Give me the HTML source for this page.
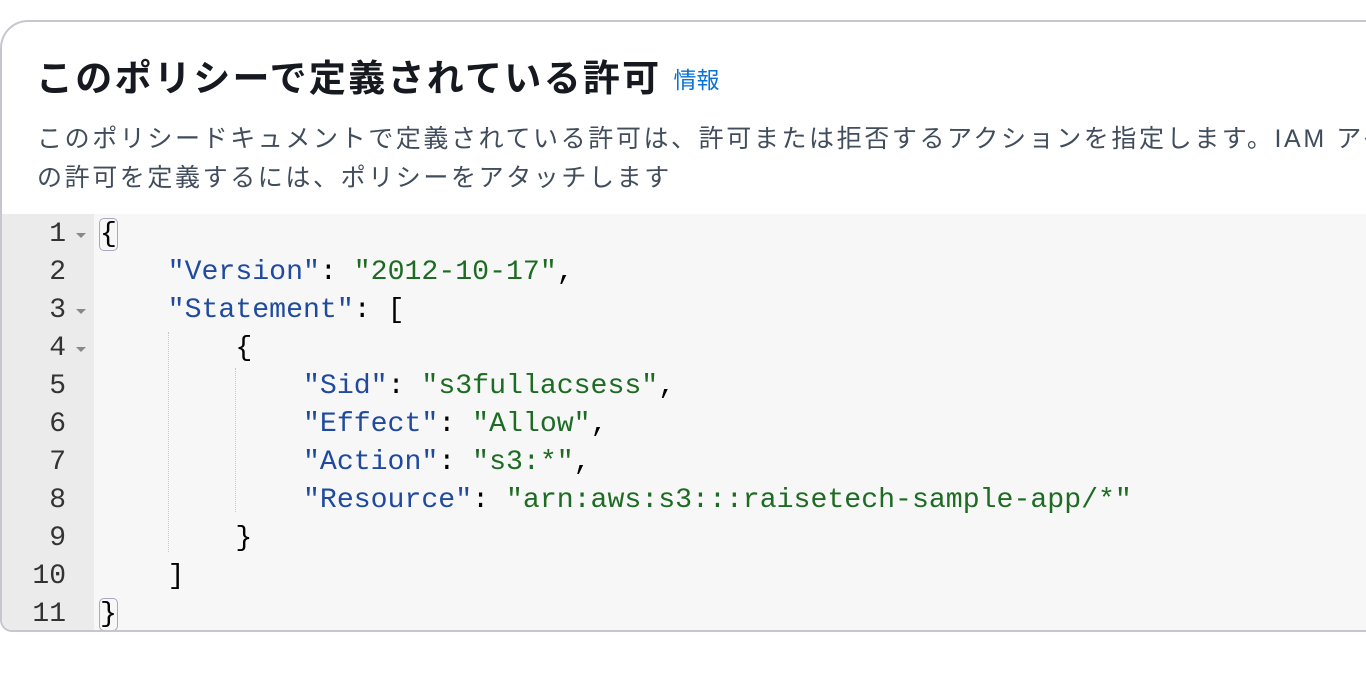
<!DOCTYPE html>
<html><head><meta charset="utf-8"><style>
body{margin:0;width:1366px;height:680px;background:#fff;overflow:hidden;position:relative;font-family:"Liberation Sans","Noto Sans CJK JP",sans-serif}
.card{position:absolute;left:0;top:20px;width:1420px;height:612px;border:2px solid #c6c6cd;border-radius:28px 0 0 12px;border-right:none;overflow:hidden;box-sizing:border-box;background:#fff}
h1{position:absolute;left:34px;top:35px;margin:0;font-size:37px;letter-spacing:2.3px;font-weight:bold;color:#16191f;white-space:nowrap;line-height:44px}
h1 span{font-size:23px;letter-spacing:0;color:#0972d3;font-weight:normal;margin-left:12px;vertical-align:3px}
.desc{position:absolute;left:35px;top:98px;font-size:25px;letter-spacing:2.6px;color:#414d5c;line-height:39px;white-space:nowrap}
.ed{position:absolute;left:0;top:192px;width:1420px;height:420px;background:#f7f7f7}
.gut{position:absolute;left:-2px;top:0;width:94px;height:420px;background:#ebebeb}
.ln{position:absolute;right:28px;width:60px;text-align:right;font:28px "Liberation Mono","DejaVu Sans Mono",monospace;color:#333;line-height:38px}
.fold{position:absolute;left:76px;width:0;height:0;border-left:5px solid transparent;border-right:5px solid transparent;border-top:5px solid #888}
.code{position:absolute;left:98px;top:0;font:28.2px "Liberation Mono","DejaVu Sans Mono",monospace;line-height:38px;white-space:pre;color:#000}
.k{color:#1f4a9e}.s{color:#1e6b23}
.br{outline:1.5px solid #a8a8c0;border-radius:4px}
.guide{position:absolute;border-left:1px dotted #c9c9b8;width:0}
</style></head><body>
<div class="card">
<h1>このポリシーで定義されている許可<span>情報</span></h1>
<div class="desc">このポリシードキュメントで定義されている許可は、許可または拒否するアクションを指定します。IAM アイデンティティ<br>の許可を定義するには、ポリシーをアタッチします</div>
<div class="ed">
<div class="gut">
<div class="ln" style="top:2px">1</div><div class="fold" style="top:19px"></div>
<div class="ln" style="top:40px">2</div>
<div class="ln" style="top:78px">3</div><div class="fold" style="top:95px"></div>
<div class="ln" style="top:116px">4</div><div class="fold" style="top:133px"></div>
<div class="ln" style="top:154px">5</div>
<div class="ln" style="top:192px">6</div>
<div class="ln" style="top:230px">7</div>
<div class="ln" style="top:268px">8</div>
<div class="ln" style="top:306px">9</div>
<div class="ln" style="top:344px">10</div>
<div class="ln" style="top:382px">11</div>
</div>
<div class="guide" style="left:166px;top:118px;height:220px"></div>
<div class="guide" style="left:233px;top:154px;height:144px"></div>
<div class="code" style="top:2px"><span class="br">{</span>
    <span class="k">"Version"</span>: <span class="s">"2012-10-17"</span>,
    <span class="k">"Statement"</span>: [
        {
            <span class="k">"Sid"</span>: <span class="s">"s3fullacsess"</span>,
            <span class="k">"Effect"</span>: <span class="s">"Allow"</span>,
            <span class="k">"Action"</span>: <span class="s">"s3:*"</span>,
            <span class="k">"Resource"</span>: <span class="s">"arn:aws:s3:::raisetech-sample-app/*"</span>
        }
    ]
<span class="br">}</span></div>
</div>
</div>
</body></html>
